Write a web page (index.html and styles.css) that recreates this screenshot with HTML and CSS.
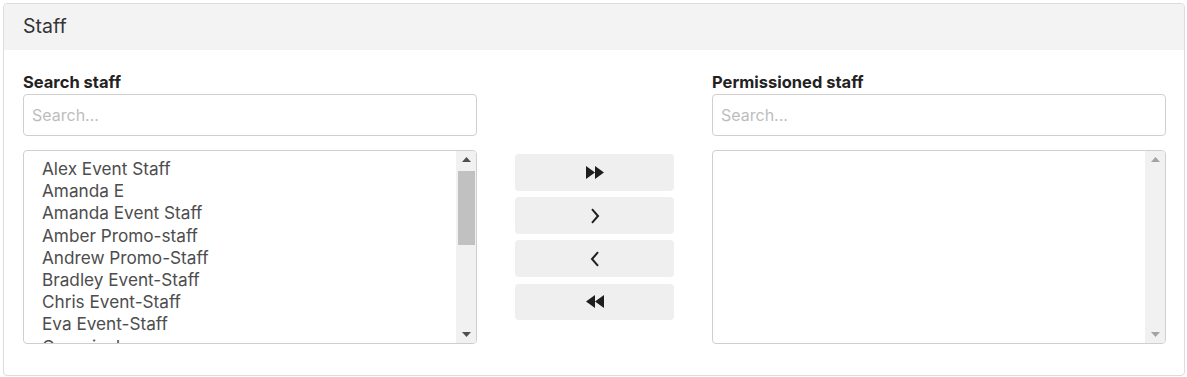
FILE: index.html
```html
<!DOCTYPE html>
<html lang="en">
<head>
<meta charset="utf-8">
<title>Staff</title>
<link rel="stylesheet" href="styles.css">
</head>
<body>
<section class="card">
  <header class="card-header">Staff</header>
  <div class="card-body">
    <div class="col">
      <label class="label" for="search-left">Search staff</label>
      <input id="search-left" class="search" type="text" placeholder="Search...">
      <div class="list">
        <ul class="list-items">
          <li>Alex Event Staff</li>
          <li>Amanda E</li>
          <li>Amanda Event Staff</li>
          <li>Amber Promo-staff</li>
          <li>Andrew Promo-Staff</li>
          <li>Bradley Event-Staff</li>
          <li>Chris Event-Staff</li>
          <li>Eva Event-Staff</li>
          <li>Georgia Jones</li>
          <li>Hannah Event-Staff</li>
          <li>Jack Promo-Staff</li>
          <li>James Event-Staff</li>
          <li>Kate Promo-Staff</li>
          <li>Laura Event-Staff</li>
          <li>Mark Promo-Staff</li>
          <li>Natalie Event-Staff</li>
          <li>Oliver Promo-Staff</li>
          <li>Sarah Event-Staff</li>
          <li>Tom Promo-Staff</li>
        </ul>
        <div class="scrollbar">
          <div class="sb-btn"><svg width="9" height="5" viewBox="0 0 9 5"><path d="M0 5 L4.5 0 L9 5 Z" fill="#505050"/></svg></div>
          <div class="sb-track"><div class="sb-thumb"></div></div>
          <div class="sb-btn"><svg width="9" height="5" viewBox="0 0 9 5"><path d="M0 0 L9 0 L4.5 5 Z" fill="#505050"/></svg></div>
        </div>
      </div>
    </div>
    <div class="buttons">
      <button class="btn" type="button" aria-label="Add all">
        <svg width="18" height="13" viewBox="0 0 18 13"><path d="M0 0 L9 6.5 L0 13 Z M9 0 L18 6.5 L9 13 Z" fill="#1e1e1e"/></svg>
      </button>
      <button class="btn" type="button" aria-label="Add">
        <svg width="10" height="16" viewBox="0 0 10 16"><path d="M2 1.2 L8 8 L2 14.8" fill="none" stroke="#1e1e1e" stroke-width="2"/></svg>
      </button>
      <button class="btn" type="button" aria-label="Remove">
        <svg width="10" height="16" viewBox="0 0 10 16"><path d="M8 1.2 L2 8 L8 14.8" fill="none" stroke="#1e1e1e" stroke-width="2"/></svg>
      </button>
      <button class="btn" type="button" aria-label="Remove all">
        <svg width="18" height="13" viewBox="0 0 18 13"><path d="M9 0 L0 6.5 L9 13 Z M18 0 L9 6.5 L18 13 Z" fill="#1e1e1e"/></svg>
      </button>
    </div>
    <div class="col">
      <label class="label" for="search-right">Permissioned staff</label>
      <input id="search-right" class="search" type="text" placeholder="Search...">
      <div class="list">
        <ul class="list-items"></ul>
        <div class="scrollbar">
          <div class="sb-btn"><svg width="9" height="5" viewBox="0 0 9 5"><path d="M0 5 L4.5 0 L9 5 Z" fill="#a3a3a3"/></svg></div>
          <div class="sb-track"></div>
          <div class="sb-btn"><svg width="9" height="5" viewBox="0 0 9 5"><path d="M0 0 L9 0 L4.5 5 Z" fill="#a3a3a3"/></svg></div>
        </div>
      </div>
    </div>
  </div>
</section>
</body>
</html>
```

FILE: styles.css
```css
* { box-sizing: border-box; }

html, body {
  margin: 0;
  background: #ffffff;
}

body {
  padding: 3px 2px 1px 3px;
  font-family: "Inter", "Liberation Sans", sans-serif;
  color: #212529;
}

.card {
  border: 1px solid #dcdcdc;
  border-radius: 4px;
  height: 373px;
  overflow: hidden;
}

.card-header {
  background: #f3f3f3;
  height: 46px;
  padding: 10px 19px 0;
  font-size: 19.5px;
  line-height: 24px;
  color: #333;
}

.card-body {
  display: grid;
  grid-template-columns: 1fr 159px 1fr;
  column-gap: 38px;
  padding: 22px 18px 0 19px;
}

.col {
  display: flex;
  flex-direction: column;
}

.label {
  font-size: 16.5px;
  font-weight: 700;
  line-height: 20px;
  color: #222;
  margin-bottom: 2px;
}

.search {
  height: 42px;
  border: 1px solid #cfcfcf;
  border-radius: 4px;
  padding: 0 8px;
  font: inherit;
  font-size: 16px;
  color: #444;
  outline: none;
}

.search::placeholder {
  color: #bdbdbd;
}

.list {
  margin-top: 14px;
  height: 194px;
  border: 1px solid #cfcfcf;
  border-radius: 4px;
  display: flex;
  overflow: hidden;
}

.list-items {
  flex: 1;
  margin: 0;
  list-style: none;
  padding: 7px 0 0 18px;
  overflow: hidden;
  font-size: 17.2px;
  line-height: 22.2px;
  color: #4d4d4d;
}

.list-items li { white-space: nowrap; }

.scrollbar {
  width: 20px;
  background: #f1f1f1;
  display: flex;
  flex-direction: column;
}

.sb-btn {
  height: 17px;
  display: flex;
  align-items: center;
  justify-content: center;
}

.sb-track {
  flex: 1;
  padding: 3px 1px 0 2px;
}

.sb-thumb {
  height: 74px;
  background: #c1c1c1;
}

.buttons {
  display: flex;
  flex-direction: column;
  gap: 6.5px;
  padding-top: 82px;
}

.btn {
  height: 36.7px;
  border: none;
  border-radius: 4px;
  background: #efefef;
  display: flex;
  align-items: center;
  justify-content: center;
  padding: 0;
}
```
